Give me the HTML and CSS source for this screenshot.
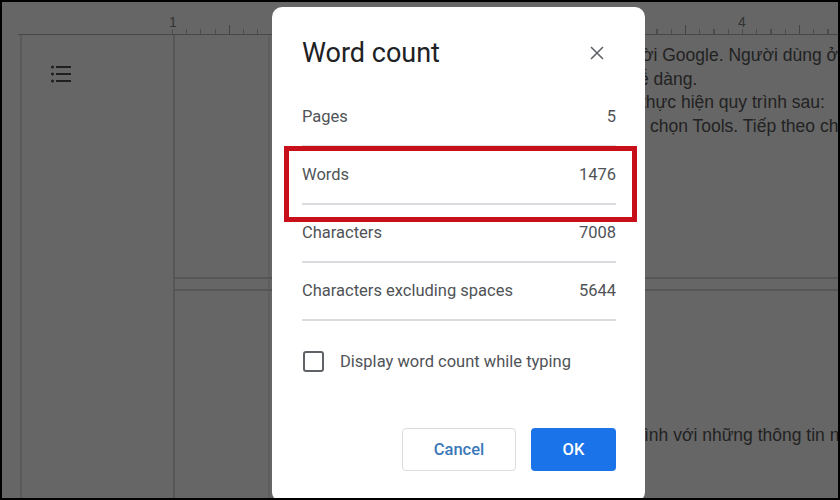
FILE: index.html
```html
<!DOCTYPE html>
<html lang="en">
<head>
    <meta charset="UTF-8">
    <meta name="viewport" content="width=device-width, initial-scale=1.0">
    <title>Word count</title>
    <link rel="stylesheet" href="styles.css">
</head>
<body>
    <div class="screen">
        <div class="doc">
            <div class="ruler">
                <span class="ruler-num">1</span>
                <span class="ruler-num ruler-num-4">4</span>
            </div>
            <div class="doc-body">
                <div class="outline">
                    <svg class="outline-icon" width="24" height="24" viewBox="0 0 24 24" fill="#1f1f1f">
                        <circle cx="3.5" cy="5" r="1.5"/>
                        <circle cx="3.5" cy="12" r="1.5"/>
                        <circle cx="3.5" cy="19" r="1.5"/>
                        <rect x="7" y="4" width="15" height="2"/>
                        <rect x="7" y="11" width="15" height="2"/>
                        <rect x="7" y="18" width="15" height="2"/>
                    </svg>
                </div>
                <div class="pages">
                    <div class="page page-first">
                        <p class="line line-a">ời Google. Người dùng ở</p>
                        <p class="line line-b">ễ dàng.</p>
                        <p class="line line-c">thực hiện quy trình sau:</p>
                        <p class="line line-d">chọn Tools. Tiếp theo ch</p>
                    </div>
                    <div class="page page-second">
                        <p class="line line-e">ình với những thông tin n</p>
                    </div>
                </div>
            </div>
        </div>

        <div class="dialog">
            <div class="dialog-head">
                <h1>Word count</h1>
                <svg class="close-icon" width="16" height="16" viewBox="0 0 16 16" fill="none" stroke="#5f6368" stroke-width="1.6">
                    <path d="M2 2 L14 14 M14 2 L2 14"/>
                </svg>
            </div>

            <div class="count-row"><span>Pages</span><span>5</span></div>
            <div class="count-row"><span>Words</span><span>1476</span></div>
            <div class="count-row"><span>Characters</span><span>7008</span></div>
            <div class="count-row"><span>Characters excluding spaces</span><span>5644</span></div>

            <div class="check-row">
                <span class="checkbox"></span>
                <span>Display word count while typing</span>
            </div>

            <div class="dialog-actions">
                <button class="btn btn-cancel">Cancel</button>
                <button class="btn btn-ok">OK</button>
            </div>

            <div class="highlight"></div>
        </div>
    </div>
</body>
</html>
```

FILE: styles.css
```css
* {
    box-sizing: border-box;
    margin: 0;
    padding: 0;
}

body {
    width: 840px;
    height: 500px;
    overflow: hidden;
    font-family: Roboto, 'Liberation Sans', sans-serif;
}

.screen {
    position: relative;
    width: 840px;
    height: 500px;
    background: #666;
    border: 2px solid #000;
    overflow: hidden;
}

/* document behind the dialog */
.doc {
    display: flex;
    flex-direction: column;
    height: 100%;
    color: #222;
}

.ruler {
    position: relative;
    height: 33px;
    flex: none;
    margin-left: 16px;
    border-bottom: 1px solid #484848;
    background:
        repeating-linear-gradient(90deg, #444 0 1px, transparent 1px 114px) 211px 100% / 100% 9px no-repeat,
        repeating-linear-gradient(90deg, #4c4c4c 0 1px, transparent 1px 14.25px) 154px 100% / 100% 5px no-repeat;
}

.ruler-num {
    position: absolute;
    top: 12px;
    left: 151px;
    font: 14px 'Liberation Sans', sans-serif;
    color: #333;
}

.ruler-num-4 {
    left: 720px;
}

.doc-body {
    flex: 1;
    display: flex;
    margin-left: 18px;
}

.outline {
    width: 153px;
    flex: none;
    padding: 27px 0 0 27px;
    border-left: 2px solid #5a5a5a;
}

.outline-icon {
    display: block;
}

.pages {
    flex: 1;
    display: flex;
    flex-direction: column;
    gap: 10px;
    border-left: 2px solid #565656;
    background: linear-gradient(#5e5e5e, #5e5e5e) 93px 0 / 2px 100% no-repeat;
}

.page {
    padding-left: 465px;
    overflow: hidden;
    background: #666;
}

.page-first {
    height: 244px;
    padding-top: 9px;
    border-bottom: 2px solid #565656;
    background: linear-gradient(#5e5e5e, #5e5e5e) 93px 0 / 2px 100% no-repeat, #666;
}

.page-second {
    flex: 1;
    border-top: 2px solid #565656;
    padding-top: 133px;
    background: linear-gradient(#5e5e5e, #5e5e5e) 93px 0 / 2px 100% no-repeat, #666;
}

.line {
    font: 17.5px/23.5px 'Liberation Sans', sans-serif;
    white-space: nowrap;
    color: #222;
}

.line-a {
    margin-left: 2px;
}

.line-b {
    margin-left: -1px;
}

.line-c {
    margin-left: 1px;
}

.line-d {
    margin-left: 10px;
}

.line-e {
    margin-left: 4px;
}

/* dialog */
.dialog {
    position: absolute;
    top: 5px;
    left: 270px;
    width: 373px;
    height: 495px;
    background: #fff;
    border-radius: 10px;
    padding: 0 29px 0 30px;
    color: #4f5357;
}

.dialog-head {
    display: flex;
    justify-content: space-between;
    align-items: center;
    height: 82px;
    padding: 9px 11px 0 0;
}

.dialog-head h1 {
    font-size: 27px;
    font-weight: 400;
    color: #202124;
}

.count-row {
    display: flex;
    justify-content: space-between;
    align-items: center;
    height: 58px;
    padding-bottom: 1px;
    font-size: 16.5px;
    border-bottom: 2px solid #dadce0;
}

.check-row {
    display: flex;
    align-items: center;
    gap: 16px;
    margin-top: 30px;
    padding-left: 1px;
    font-size: 16.5px;
}

.checkbox {
    width: 21px;
    height: 21px;
    border: 2px solid #5f6368;
    border-radius: 3px;
}

.dialog-actions {
    display: flex;
    justify-content: flex-end;
    gap: 15px;
    margin-top: 56px;
}

.btn {
    height: 43px;
    border-radius: 4px;
    font-family: inherit;
    font-size: 16.5px;
    font-weight: 500;
    border: none;
}

.btn-cancel {
    width: 114px;
    background: #fff;
    color: #3b78b8;
    border: 1px solid #dadce0;
}

.btn-ok {
    width: 85px;
    background: #1a73e8;
    color: #fff;
}

/* red box drawn over the Words row */
.highlight {
    position: absolute;
    top: 139px;
    left: 12px;
    width: 353px;
    height: 76px;
    border: 5px solid #c8101a;
}
```
